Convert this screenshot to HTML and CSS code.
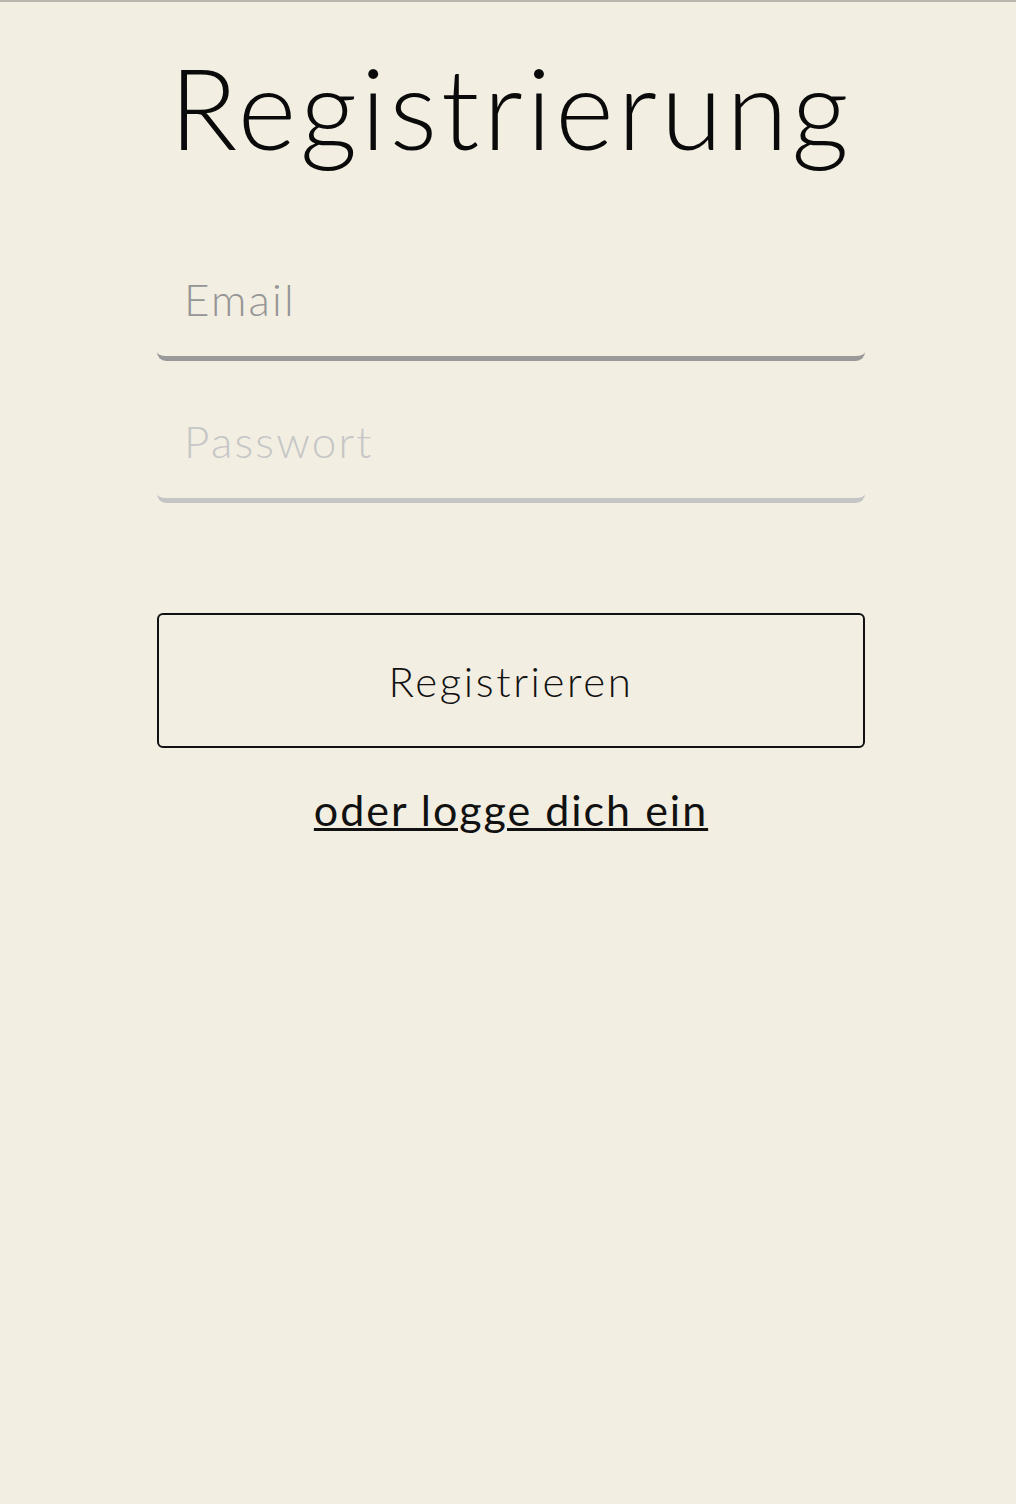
FILE: index.html
```html
<!DOCTYPE html>
<html lang="de">
<head>
<meta charset="utf-8">
<title>Registrierung</title>
<link rel="stylesheet" href="styles.css">
</head>
<body>
<div class="topline"></div>
<main class="page">
  <h1 class="title">Registrierung</h1>
  <form class="form">
    <div class="field field-email"><input class="input" type="email" placeholder="Email"></div>
    <div class="field field-pass"><input class="input" type="password" placeholder="Passwort"></div>
    <button class="btn" type="button">Registrieren</button>
    <a class="link" href="#">oder logge dich ein</a>
  </form>
</main>
</body>
</html>
```
FILE: styles.css
```css
html, body {
  margin: 0;
  padding: 0;
  background: #f2eee2;
  height: 100%;
}
body {
  font-family: Lato, "Open Sans", sans-serif;
  color: #111;
}
.topline {
  height: 2px;
  background: #bab7ae;
}
.page {
  display: flex;
  flex-direction: column;
  padding: 0 151px 0 157px;
}
.title {
  margin: 40px 0 0;
  font-weight: 300;
  font-size: 112px;
  line-height: 130px;
  letter-spacing: 3.8px;
  text-align: center;
  color: #0a0a0a;
}
.form {
  display: flex;
  flex-direction: column;
  margin-top: 86px;
}
.field {
  height: 98px;
  border-bottom: 5px solid #999;
  border-radius: 0 0 9px 9px;
  display: flex;
}
.field-pass {
  margin-top: 39px;
  border-bottom-color: #c5c5c5;
}
.input {
  flex: 1;
  border: 0;
  background: transparent;
  font-family: Lato, sans-serif;
  font-weight: 300;
  font-size: 44px;
  letter-spacing: 2.2px;
  padding: 0 27px 16px;
  outline: none;
}
.field-email .input::placeholder { color: #959595; }
.field-pass .input::placeholder { color: #c6c6c6; }
.btn {
  margin-top: 110px;
  height: 135px;
  border: 2px solid #111;
  border-radius: 6px;
  background: transparent;
  font-family: Lato, sans-serif;
  font-weight: 300;
  font-size: 42px;
  letter-spacing: 2.6px;
  color: #111;
  cursor: pointer;
}
.link {
  align-self: center;
  margin-top: 36px;
  font-size: 43px;
  letter-spacing: 2px;
  color: #111;
  text-decoration: underline;
  text-decoration-thickness: 3px;
}
```
